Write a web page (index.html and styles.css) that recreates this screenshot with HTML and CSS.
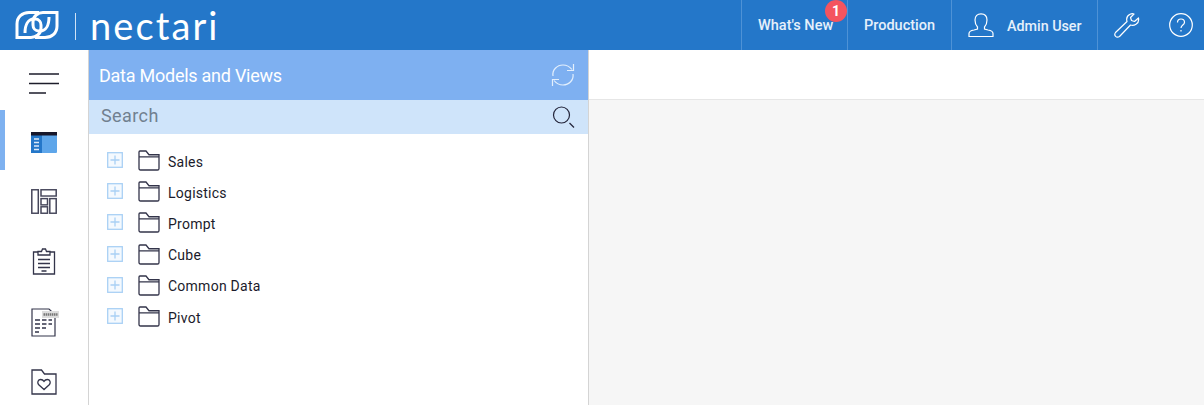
FILE: index.html
```html
<!DOCTYPE html>
<html lang="en">
<head>
<meta charset="utf-8">
<title>Nectari</title>
<link rel="stylesheet" href="styles.css">
</head>
<body>
<header class="topbar">
  <div class="brand">
    <svg class="logo-mark" width="44" height="30" viewBox="0 0 44 30" fill="none" stroke="#fff" stroke-width="3">
      <path d="M10 23C10 15 13 9 19 9H20C24 9 26 12 26 15V18C26 24 21 27.500 16 27.500H2V14C2 7 7 2.500 14 2.500H24"/>
      <path d="M34 7C34 15 31 21 25 21H24C20 21 18 18 18 15V12C18 6 23 2.500 28 2.500H42V16C42 23 37 27.500 30 27.500H20"/>
    </svg>
    <span class="brand-rule"></span>
    <span class="wordmark">nectari</span>
  </div>
  <nav class="topnav">
    <a class="nav-item nav-new">What's New<span class="badge">1</span></a>
    <a class="nav-item nav-prod">Production</a>
    <a class="nav-item nav-user">
      <svg width="26" height="24" viewBox="0 0 26 24" fill="none" stroke="#fff" stroke-width="1.200">
        <path d="M1 23.500V20.500C1 18.500 3 17.500 6 17L9.500 16V14C7.500 12 7 9.500 7 7C7 3 9.500 .8 13 .8S19 3 19 7C19 9.500 18.500 12 16.500 14V16L20 17C23 17.500 25 18.500 25 20.500V23.500Z"/>
      </svg>
      <span class="user-name">Admin User</span>
    </a>
    <a class="nav-item nav-tool">
      <svg width="26" height="25" viewBox="0 0 26 25" fill="none" stroke="#fff" stroke-width="1.200" stroke-linejoin="round">
        <path d="M1.500 19.500L13 8.500C12 5 13.500 2.500 16 1.200C17.500 .6 19 .6 20 1L16.500 4.500L17.500 7.500L20.500 8.500L24.500 5C25 7.500 24 10 22 11.200C20 12.500 18 12.500 16.500 12L5.500 23.500C4 24.500 2.500 24.200 1.600 23.300C.7 22.300 .6 20.700 1.500 19.500Z"/>
      </svg>
    </a>
    <a class="nav-item nav-help">
      <svg width="24" height="24" viewBox="0 0 24 24" fill="none" stroke="#fff" stroke-width="1.200">
        <circle cx="12" cy="12" r="11.300"/>
        <path d="M8.500 9.500C8.500 7.300 10 6 12 6S15.500 7.300 15.500 9.200C15.500 12 12 12 12 15"/>
        <path d="M12 17V18.500"/>
      </svg>
    </a>
  </nav>
</header>
<div class="workspace">
  <aside class="rail">
    <button class="rail-btn rail-menu">
      <svg width="30" height="21" viewBox="0 0 30 21" stroke="#1d1d2b" stroke-width="1.600">
        <path d="M0 1H30M0 10.500H30M0 20H17"/>
      </svg>
    </button>
    <button class="rail-btn rail-active">
      <svg width="26" height="21" viewBox="0 0 26 21">
        <rect width="26" height="21" rx="1" fill="#5ea6ea"/>
        <rect y="3" width="11" height="18" fill="#2477c9"/>
        <rect width="26" height="3.500" fill="#17172a"/>
        <path d="M3 7H8M3 10.500H8M3 14H8M3 17.500H8" stroke="#dbe9f9" stroke-width="1.300"/>
      </svg>
    </button>
    <button class="rail-btn">
      <svg width="26" height="25" viewBox="0 0 26 26" preserveAspectRatio="none" fill="none" stroke="#45465a" stroke-width="1.500">
        <rect x=".8" y=".8" width="6.500" height="24.400"/>
        <rect x="10" y=".8" width="15.200" height="6.500"/>
        <rect x="10" y="10" width="6.500" height="6.500"/>
        <rect x="10" y="18.500" width="6.500" height="6.700"/>
        <rect x="18.800" y="10" width="6.400" height="15.200"/>
      </svg>
    </button>
    <button class="rail-btn">
      <svg width="24" height="27" viewBox="0 0 24 27" fill="none" stroke="#33344a" stroke-width="1.300">
        <path d="M6 4H1.500V26H22.500V4H18"/>
        <path d="M6 7V3.500H9.500L10.500 1H13.500L14.500 3.500H18V7Z"/>
        <path d="M6 11.500H18M6 15.500H18M6 19.500H18M9.500 23H14.500"/>
      </svg>
    </button>
    <button class="rail-btn rail-doc">
      <svg width="28" height="29" viewBox="0 0 28 29" fill="none" stroke="#33344a" stroke-width="1.200">
        <path d="M1 1H18L24 6.500V28H1Z"/>
        <path d="M4 12H9M11 12H15.500M17.500 12H21M4 16H9M11 16H15.500M17.500 16H21M4 20H9M11 20H15M4 24H8" stroke-width="1.600"/>
        <rect class="preview-tag" x="11" y="3" width="17" height="7"/>
        <path d="M12.500 6.500H26.500" stroke="#777" stroke-width="2.500" stroke-dasharray="1.500 .6"/>
      </svg>
    </button>
    <button class="rail-btn">
      <svg width="26" height="26" viewBox="0 0 26 26" fill="none" stroke="#33344a" stroke-width="1.300">
        <path d="M1 1H10.500L13.500 5H25V25H1Z"/>
        <path d="M13 20.500L7.500 15.500C6 13.500 7 10.500 9.700 10.500C11.200 10.500 12.300 11.200 13 12.300C13.700 11.200 14.800 10.500 16.300 10.500C19 10.500 20 13.500 18.500 15.500Z"/>
      </svg>
    </button>
  </aside>
  <section class="panel">
    <div class="panel-head">
      <h1>Data Models and Views</h1>
      <svg width="24" height="24" viewBox="0 0 24 24" fill="none" stroke="#e3effc" stroke-width="1.200">
        <path d="M2 13C1 7 6 2 12 2C16 2 19 4 21 6.500M22 11C23 17 18 22 12 22C8 22 5 20 3 17.500"/>
        <path d="M22.500 1V7.500H16M1.500 23V16.500H8"/>
      </svg>
    </div>
    <div class="search">
      <span class="search-label">Search</span>
      <svg width="23" height="23" viewBox="0 0 23 23" fill="none" stroke="#24253a" stroke-width="1.200">
        <circle cx="9.500" cy="9" r="8"/>
        <path d="M17.500 17L22 21.500"/>
      </svg>
    </div>
    <ul class="tree">
      <li class="tree-row"><svg class="plus" width="16" height="16" viewBox="0 0 16 16"><use href="#i-plus"/></svg><svg class="folder" width="22" height="21" viewBox="0 0 22 20" preserveAspectRatio="none"><use href="#i-folder"/></svg><span>Sales</span></li>
      <li class="tree-row"><svg class="plus" width="16" height="16" viewBox="0 0 16 16"><use href="#i-plus"/></svg><svg class="folder" width="22" height="21" viewBox="0 0 22 20" preserveAspectRatio="none"><use href="#i-folder"/></svg><span>Logistics</span></li>
      <li class="tree-row"><svg class="plus" width="16" height="16" viewBox="0 0 16 16"><use href="#i-plus"/></svg><svg class="folder" width="22" height="21" viewBox="0 0 22 20" preserveAspectRatio="none"><use href="#i-folder"/></svg><span>Prompt</span></li>
      <li class="tree-row"><svg class="plus" width="16" height="16" viewBox="0 0 16 16"><use href="#i-plus"/></svg><svg class="folder" width="22" height="21" viewBox="0 0 22 20" preserveAspectRatio="none"><use href="#i-folder"/></svg><span>Cube</span></li>
      <li class="tree-row"><svg class="plus" width="16" height="16" viewBox="0 0 16 16"><use href="#i-plus"/></svg><svg class="folder" width="22" height="21" viewBox="0 0 22 20" preserveAspectRatio="none"><use href="#i-folder"/></svg><span>Common Data</span></li>
      <li class="tree-row"><svg class="plus" width="16" height="16" viewBox="0 0 16 16"><use href="#i-plus"/></svg><svg class="folder" width="22" height="21" viewBox="0 0 22 20" preserveAspectRatio="none"><use href="#i-folder"/></svg><span>Pivot</span></li>
    </ul>
  </section>
  <main class="content">
    <div class="content-bar"></div>
    <div class="content-body"></div>
  </main>
</div>
<svg class="defs" width="0" height="0">
  <symbol id="i-plus" viewBox="0 0 16 16">
    <rect x=".7" y=".7" width="14.600" height="14.600" fill="#f4f9fe" stroke="#a9d0f5" stroke-width="1.300"/>
    <path d="M8 3.500V12.500M3.500 8H12.500" stroke="#a9d0f5" stroke-width="1.300"/>
  </symbol>
  <symbol id="i-folder" viewBox="0 0 22 20">
    <path d="M1 17.500V2C1 1.300 1.300 1 2 1H8L11 4.500H21V17.500C21 18.300 20.500 19 19.500 19H2.500C1.500 19 1 18.300 1 17.500ZM1 6.500H21" fill="#fff" stroke="#33344a" stroke-width="1.300"/>
  </symbol>
</svg>
</body>
</html>
```
FILE: styles.css
```css
* { box-sizing: border-box; }
html, body { margin: 0; height: 100%; overflow: hidden; }
body { font-family: "Roboto", "Liberation Sans", sans-serif; background: #fff; display: flex; flex-direction: column; }

.topbar { height: 50px; flex: none; background: #2477c9; color: #fff; display: flex; justify-content: space-between; }
.brand { display: flex; align-items: center; padding-left: 15px; }
.logo-mark { display: block; }
.brand-rule { width: 1px; height: 27px; background: #cfe2f6; margin: 2px 14px 0 16px; }
.wordmark { font-family: "Lato", sans-serif; font-weight: 400; font-size: 38px; letter-spacing: 2.100px; line-height: 50px; margin-top: -1px; }
.topnav { display: flex; }
.nav-item { display: flex; align-items: center; position: relative; border-left: 1px solid #4e92d6; font-size: 14.500px; font-weight: 500; color: #e6f0fb; height: 50px; }
.nav-new { width: 106px; padding-left: 16px; }
.nav-prod { width: 104px; padding-left: 16px; }
.nav-user { width: 146px; padding-left: 16px; gap: 13px; }
.user-name { font-size: 14.300px; margin-top: 1px; }
.nav-tool { width: 60px; padding-left: 16px; }
.nav-help { width: 47px; border-left: 0; padding-left: 12px; }
.nav-item svg { display: block; }
.badge { position: absolute; top: 0; left: 83px; width: 22px; height: 22px; border-radius: 50%; background: #f4545f; color: #fff; font-size: 14px; font-weight: 700; display: flex; align-items: center; justify-content: center; }

.workspace { flex: 1; display: flex; min-height: 0; }
.rail { width: 89px; flex: none; border-right: 1px solid #d4d4d4; background: #fff; display: flex; flex-direction: column; }
.rail-btn { height: 60px; flex: none; border: 0; padding: 3px 0 0; background: transparent; display: flex; align-items: center; justify-content: center; }
.rail-menu { padding-top: 6px; }
.rail-active { box-shadow: inset 5px 0 0 #7eb1f0; padding-top: 5px; }
.rail-doc { padding-top: 5px; padding-left: 2px; }
.preview-tag { fill: #ddd; stroke: none; }

.panel { width: 500px; flex: none; border-right: 1px solid #d4d4d4; display: flex; flex-direction: column; }
.panel-head { height: 50px; flex: none; background: #7eb0f1; display: flex; align-items: center; justify-content: space-between; padding: 0 13px 0 10px; }
.panel-head h1 { margin: 0; font-size: 18px; letter-spacing: -.25px; font-weight: 400; color: #fff; }
.search { height: 34px; flex: none; background: #cfe4fa; display: flex; align-items: center; justify-content: space-between; padding: 0 13px 0 12px; font-size: 18px; color: #71808f; letter-spacing: .4px; }
.search-label { margin-top: -4px; }
.tree { list-style: none; margin: 0; padding: 12px 0 0 18px; }
.tree-row { height: 31.200px; display: flex; align-items: center; font-size: 14px; letter-spacing: .25px; color: #1b1b2b; }
.plus { margin: 0 15px 3px 0; display: block; }
.folder { margin: 0 8px 2px 0; display: block; }

.content { flex: 1; display: flex; flex-direction: column; }
.content-bar { height: 50px; flex: none; background: #fff; border-bottom: 1px solid #e6e6e6; }
.content-body { flex: 1; background: #f6f6f6; }
.defs { position: absolute; }
```
